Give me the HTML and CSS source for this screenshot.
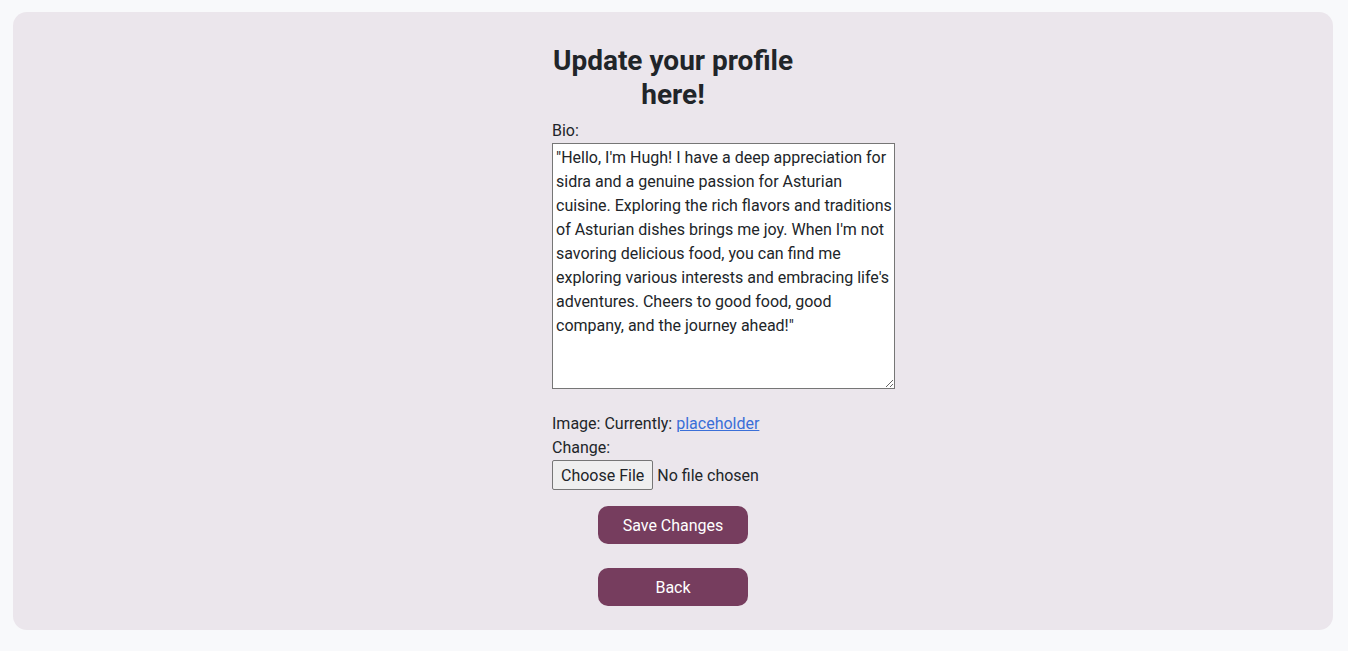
FILE: index.html
```html
<!DOCTYPE html>
<html lang="en">
<head>
<meta charset="utf-8">
<title>Update profile</title>
<link rel="stylesheet" href="styles.css">
</head>
<body>
<main class="card">
  <form class="profile-form">
    <h2 class="title">Update your profile here!</h2>
    <label class="field-label" for="bio">Bio:</label>
    <textarea id="bio" class="bio" rows="10">"Hello, I'm Hugh! I have a deep appreciation for sidra and a genuine passion for Asturian cuisine. Exploring the rich flavors and traditions of Asturian dishes brings me joy. When I'm not savoring delicious food, you can find me exploring various interests and embracing life's adventures. Cheers to good food, good company, and the journey ahead!"</textarea>
    <div class="image-row image-row-first">Image: Currently: <a href="#" class="link">placeholder</a></div>
    <div class="image-row">Change:</div>
    <input type="file" class="file-input">
    <div class="actions">
      <button type="button" class="btn">Save Changes</button>
      <button type="button" class="btn">Back</button>
    </div>
  </form>
</main>
</body>
</html>
```
FILE: styles.css
```css
html, body {
  margin: 0;
  padding: 0;
}
body {
  background: #f8f9fb;
  font-family: Roboto, "Liberation Sans", sans-serif;
  font-size: 16px;
  line-height: 24px;
  color: #212529;
  padding: 12px 15px 21px 13px;
}
.card {
  background: #ebe6ec;
  border-radius: 14px;
  padding: 32px 0 24px;
}
.profile-form {
  width: 242px;
  margin: 0 auto;
  display: flex;
  flex-direction: column;
  align-items: flex-start;
}
.title {
  margin: 0 0 7px;
  font-size: 28px;
  line-height: 34px;
  font-weight: 700;
  text-align: center;
  width: 100%;
  color: #212529;
}
.field-label {
  display: block;
}
.bio {
  box-sizing: border-box;
  width: 343px;
  height: 246px;
  flex-shrink: 0;
  margin: 0;
  padding: 2px 0 2px 3px;
  border: 1px solid #767676;
  font-family: Roboto, "Liberation Sans", sans-serif;
  font-size: 16px;
  line-height: 24px;
  color: #212529;
  background: #fff;
  resize: vertical;
}
.image-row-first {
  margin-top: 23px;
}
.link {
  color: #3a6fd8;
  text-decoration: underline;
}
.file-input {
  font-family: inherit;
  font-size: 16px;
  color: #212529;
  margin: 0;
  padding: 0;
  height: 30px;
}
.file-input::file-selector-button {
  font-family: inherit;
  font-size: 16px;
  color: #212529;
  background: #efefef;
  border: 1px solid #767676;
  border-radius: 2px;
  padding: 4px 8px;
  margin-right: 4px;
  height: 30px;
}
.actions {
  width: 100%;
  display: flex;
  flex-direction: column;
  align-items: center;
  gap: 24px;
  margin-top: 16px;
}
.btn {
  width: 150px;
  height: 38px;
  border: none;
  border-radius: 10px;
  background: #763d5e;
  color: #fff;
  font-family: Roboto, "Liberation Sans", sans-serif;
  font-size: 16px;
  cursor: pointer;
}
```
